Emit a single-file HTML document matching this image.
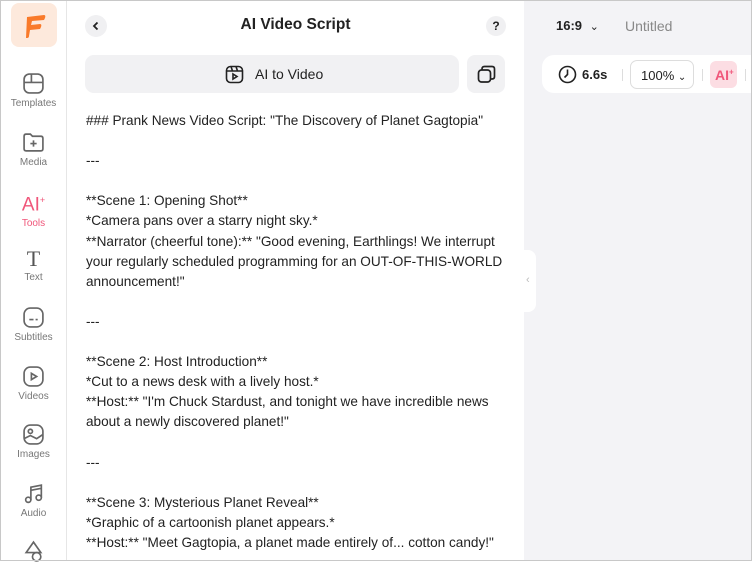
<!DOCTYPE html>
<html><head><meta charset="utf-8"><style>
*{margin:0;padding:0;box-sizing:border-box}
body{width:752px;height:561px;overflow:hidden;font-family:"Liberation Sans",sans-serif;background:#fff;position:relative}
.frame{position:absolute;inset:0;border:1px solid #c8c8c8;pointer-events:none;z-index:9}
.side{position:absolute;left:0;top:0;width:67px;height:561px;border-right:1px solid #e6e6e6;background:#fff}
.logo{position:absolute;left:11px;top:3px;width:46px;height:44px;background:#fde9dc;border-radius:8px}
.nav{position:absolute;left:0;width:67px;text-align:center;font-size:10px;color:#777}
.nav svg{display:block;margin:0 auto 3px}
.panel{position:absolute;left:67px;top:0;width:457px;height:561px;background:#fff}
.right{position:absolute;left:524px;top:0;right:0;height:561px;background:#f3f3f6}
.title{position:absolute;left:0;width:457px;top:16px;text-align:center;font-size:15.5px;font-weight:bold;color:#222}
.back{position:absolute;left:18px;top:15px;width:22px;height:22px;border-radius:50%;background:#f0f0f2}
.help{position:absolute;left:419px;top:16px;width:20px;height:20px;border-radius:50%;background:#f0f0f2;font-size:12px;font-weight:bold;text-align:center;line-height:20px;color:#222}
.btn{position:absolute;left:18px;top:55px;width:374px;height:38px;background:#f1f1f3;border-radius:9px;font-size:14px;color:#222}
.copy{position:absolute;left:400px;top:55px;width:38px;height:38px;background:#f1f1f3;border-radius:8px}
.text{position:absolute;left:19px;top:111px;font-size:13.6px;line-height:20.1px;color:#222;white-space:pre}
.tool{position:absolute;left:542px;top:55px;width:220px;height:38px;background:#fff;border-radius:12px}
</style></head><body>
<div class="side">
 <div class="logo"><svg width="46" height="44" viewBox="0 0 46 44"><path d="M16 14 L33 12 Q35 12 34 15 L33 17 L21 18 L20 22 L29 21 Q31 21 30 24 L29 26 L19 27 L18 33 Q18 35 16 35 L15 35 Z" fill="#f97a2a"/></svg></div>
 <div class="nav" style="top:72px"><svg width="23" height="23" viewBox="0 0 22 22" fill="none" stroke="#666" stroke-width="1.6"><rect x="2" y="2" width="18" height="18" rx="5"/><path d="M2 10H20M9 2V10"/></svg>Templates</div>
 <div class="nav" style="top:131px"><svg width="23" height="23" viewBox="0 0 22 22" fill="none" stroke="#666" stroke-width="1.6"><path d="M2 5Q2 3 4 3H8L10 5H18Q20 5 20 7V17Q20 19 18 19H4Q2 19 2 17Z"/><path d="M11 9V15M8 12H14"/></svg>Media</div>
 <div class="nav" style="top:190px;color:#f0567a"><div style="font-size:19px;line-height:20px;margin-bottom:3px">AI<sup style="font-size:9px">+</sup></div>Tools</div>
 <div class="nav" style="top:248px"><div style="font-size:22px;line-height:22px;font-family:'Liberation Serif';color:#555;margin-bottom:2px">T</div>Text</div>
 <div class="nav" style="top:306px"><svg width="23" height="23" viewBox="0 0 22 22" fill="none" stroke="#666" stroke-width="1.6"><rect x="2" y="2" width="18" height="18" rx="6"/><path d="M7 13H11M13 13H15"/></svg>Subtitles</div>
 <div class="nav" style="top:365px"><svg width="23" height="23" viewBox="0 0 22 22" fill="none" stroke="#666" stroke-width="1.6"><rect x="2" y="2" width="18" height="18" rx="6"/><path d="M9 8L14 11L9 14Z"/></svg>Videos</div>
 <div class="nav" style="top:423px"><svg width="23" height="23" viewBox="0 0 22 22" fill="none" stroke="#666" stroke-width="1.6"><rect x="2" y="2" width="18" height="18" rx="6"/><circle cx="8" cy="8" r="2"/><path d="M2 15L8 12L14 15L20 11"/></svg>Images</div>
 <div class="nav" style="top:482px"><svg width="23" height="23" viewBox="0 0 22 22" fill="none" stroke="#666" stroke-width="1.6"><circle cx="6" cy="17" r="2.5"/><circle cx="16" cy="15" r="2.5"/><path d="M8.5 17V5L18.5 3V15M8.5 8L18.5 6"/></svg>Audio</div>
 <div class="nav" style="top:540px"><svg width="23" height="23" viewBox="0 0 22 22" fill="none" stroke="#666" stroke-width="1.6"><path d="M11 2L4 12H18Z"/><circle cx="14" cy="16" r="4"/></svg></div>
</div>
<div class="panel">
 <div class="back"><svg width="22" height="22" viewBox="0 0 22 22" fill="none" stroke="#222" stroke-width="1.8"><path d="M12.5 7.5L9 11L12.5 14.5"/></svg></div>
 <div class="title">AI Video Script</div>
 <div class="help">?</div>
 <div class="btn"><svg style="position:absolute;left:140px;top:10px" width="19" height="19" viewBox="0 0 19 19" fill="none" stroke="#222" stroke-width="1.6"><rect x="1.5" y="1.5" width="16" height="16" rx="4"/><path d="M1.5 6H17.5M6 1.5L7.5 6M11 1.5L12.5 6M8 9L12 11.5L8 14Z"/></svg><span style="position:absolute;left:170px;top:11px">AI to Video</span></div>
 <div class="copy"><svg style="position:absolute;left:10px;top:10px" width="19" height="19" viewBox="0 0 19 19" fill="none" stroke="#222" stroke-width="1.7"><rect x="1.5" y="5" width="12" height="12" rx="3"/><path d="M5 5V4Q5 1.5 7.5 1.5H15Q17.5 1.5 17.5 4V11.5Q17.5 14 15 14H13.5"/></svg></div>
 <div class="text">### Prank News Video Script: "The Discovery of Planet Gagtopia"

---

**Scene 1: Opening Shot**
*Camera pans over a starry night sky.*
**Narrator (cheerful tone):** "Good evening, Earthlings! We interrupt
your regularly scheduled programming for an OUT-OF-THIS-WORLD
announcement!"

---

**Scene 2: Host Introduction**
*Cut to a news desk with a lively host.*
**Host:** "I'm Chuck Stardust, and tonight we have incredible news
about a newly discovered planet!"

---

**Scene 3: Mysterious Planet Reveal**
*Graphic of a cartoonish planet appears.*
**Host:** "Meet Gagtopia, a planet made entirely of... cotton candy!"</div>
</div>
<div class="right">
 <div style="position:absolute;left:0;top:250px;width:12px;height:62px;background:#fff;border-radius:0 8px 8px 0"></div>
 <div style="position:absolute;left:2px;top:274px;font-size:11px;color:#bbb">‹</div>
 <div style="position:absolute;left:32px;top:18px;font-size:13px;font-weight:bold;color:#222">16:9 <span style="font-weight:normal;font-size:11px;margin-left:4px">⌄</span></div>
 <div style="position:absolute;left:101px;top:18px;font-size:14px;color:#888">Untitled</div>
</div>
<div class="tool">
 <svg style="position:absolute;left:16px;top:10px" width="19" height="19" viewBox="0 0 19 19" fill="none" stroke="#222" stroke-width="1.6"><circle cx="9.5" cy="9.5" r="8"/><path d="M9.5 4.5V9.5L6.5 12.5"/></svg>
 <span style="position:absolute;left:40px;top:12px;font-size:13px;font-weight:bold;color:#222">6.6s</span>
 <div style="position:absolute;left:80px;top:14px;width:1px;height:12px;background:#ddd"></div>
 <div style="position:absolute;left:88px;top:5px;width:64px;height:29px;border:1px solid #ddd;border-radius:7px;font-size:13px;color:#222;padding:7px 0 0 10px">100% <span style="font-size:10px">⌄</span></div>
 <div style="position:absolute;left:160px;top:14px;width:1px;height:12px;background:#ddd"></div>
 <div style="position:absolute;left:168px;top:6px;width:27px;height:27px;background:#fcdde3;border-radius:6px;color:#f0567a;font-size:14px;font-weight:bold;padding:6px 0 0 5px">AI<sup style="font-size:8px">+</sup></div>
 <div style="position:absolute;left:203px;top:14px;width:1px;height:12px;background:#ddd"></div>
</div>
<div class="frame"></div>
</body></html>
